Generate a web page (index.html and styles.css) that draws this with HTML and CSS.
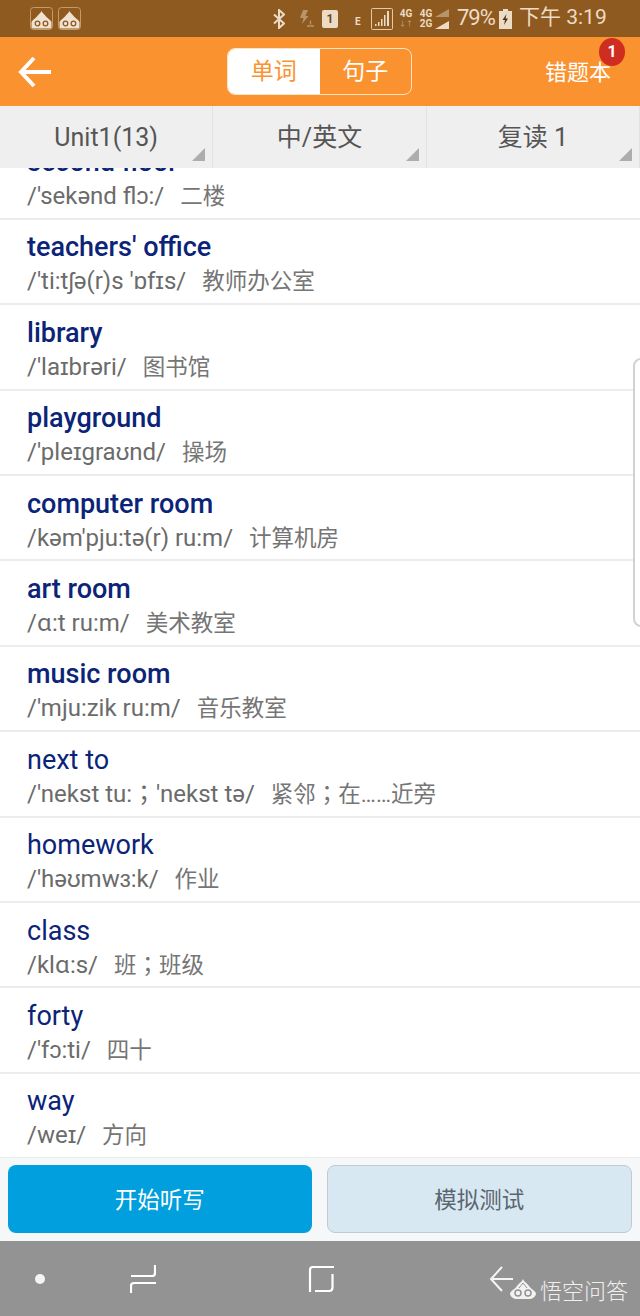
FILE: index.html
```html
<!DOCTYPE html>
<html lang="zh-CN">

<head>
  <meta charset="UTF-8">
  <meta name="viewport" content="width=device-width, initial-scale=1.0">
  <title>单词</title>
  <link rel="stylesheet" href="styles.css">
</head>

<body>
  <div class="phone">
    <!-- status bar -->
    <div class="status-bar">
      <div class="status-left">
        <svg class="app-icon" viewBox="0 0 23 23"><rect x="0.5" y="0.5" width="22" height="22" rx="3" fill="none" stroke="#c79a63"/><path d="M11.500 4c1 2.500 3 3 4.500 5.500 1.500 2 4 3 5.500 5.500v5q0 1.500-1.500 1.500H3q-1.500 0-1.500-1.500v-5c1.500-2.500 4-3.500 5.500-5.500C8.500 7 10.500 6.500 11.500 4z" fill="#efe2d0"/><circle cx="7.500" cy="16.500" r="2.300" fill="none" stroke="#8f5a1f" stroke-width="1.300"/><circle cx="15.500" cy="16.500" r="2.300" fill="none" stroke="#8f5a1f" stroke-width="1.300"/></svg>
        <svg class="app-icon" viewBox="0 0 23 23"><rect x="0.5" y="0.5" width="22" height="22" rx="3" fill="none" stroke="#c79a63"/><path d="M11.500 4c1 2.500 3 3 4.500 5.500 1.500 2 4 3 5.500 5.500v5q0 1.500-1.500 1.500H3q-1.500 0-1.500-1.500v-5c1.500-2.500 4-3.500 5.500-5.500C8.500 7 10.500 6.500 11.500 4z" fill="#efe2d0"/><circle cx="7.500" cy="16.500" r="2.300" fill="none" stroke="#8f5a1f" stroke-width="1.300"/><circle cx="15.500" cy="16.500" r="2.300" fill="none" stroke="#8f5a1f" stroke-width="1.300"/></svg>
      </div>
      <div class="status-right">
        <svg class="ic-bt" viewBox="0 0 12 20"><path d="M1 5.500l10 9-5 4.500V1l5 4.500-10 9" fill="none" stroke="#ecdcc6" stroke-width="2"/></svg>
        <svg class="ic-flash" viewBox="0 0 16 20"><path d="M5 1h5L7.500 7h3L4 15l1.500-6H2z" fill="#b99468"/><path d="M9 17h7M12.500 11.500v4" stroke="#b99468" stroke-width="1.300"/></svg>
        <div class="sim">1</div>
        <span class="net-e">E</span>
        <svg class="ic-signal" viewBox="0 0 22 22"><rect x="0.5" y="0.5" width="21" height="21" rx="1" fill="none" stroke="#e6c9a3"/><path d="M4 18h1.500v-2H4zM7 18h1.500v-4H7zM10 18h1.500v-7H10zM13 18h1.500V7H13zM16 18h2V3h-2z" fill="#ecdcc6"/></svg>
        <div class="net-pair">
          <span>4G</span>
          <span class="net-arrows">↓↑</span>
        </div>
        <div class="net-pair">
          <span>4G</span>
          <span>2G</span>
        </div>
        <svg class="ic-bars" viewBox="0 0 16 20"><path d="M1 8L15 0v8z" fill="#b99468"/><path d="M1 20l14-8v8z" fill="#ecdcc6"/></svg>
        <span class="battery-text">79%</span>
        <svg class="ic-battery" viewBox="0 0 13 20"><path d="M4 0h5v2h4v18H0V2h4z" fill="#ecdcc6"/><path d="M7.500 5L3.500 11h2.500l-1 5 4-6.500H6.500z" fill="#4a3113"/></svg>
        <span class="clock">下午 3:19</span>
      </div>
    </div>

    <!-- header -->
    <header class="app-header">
      <svg class="back" viewBox="0 0 34 32"><path d="M33 16H4M16 2L3 16l13 14" fill="none" stroke="#fff" stroke-width="4"/></svg>
      <div class="switch">
        <div class="switch-item active">单词</div>
        <div class="switch-item">句子</div>
      </div>
      <div class="wrong-book">错题本<span class="badge">1</span></div>
    </header>

    <!-- filters -->
    <div class="filters">
      <div class="filter">Unit1(13)</div>
      <div class="filter">中/英文</div>
      <div class="filter">复读 1</div>
    </div>

    <!-- word list -->
    <div class="list-wrap">
      <ul class="word-list">
        <li class="word"><div class="en bold">second floor</div><div class="ph">/'sekənd flɔ:/<span class="zh">二楼</span></div></li>
        <li class="word"><div class="en bold">teachers' office</div><div class="ph">/'ti:tʃə(r)s 'ɒfɪs/<span class="zh">教师办公室</span></div></li>
        <li class="word"><div class="en bold">library</div><div class="ph">/'laɪbrəri/<span class="zh">图书馆</span></div></li>
        <li class="word"><div class="en bold">playground</div><div class="ph">/'pleɪgraʊnd/<span class="zh">操场</span></div></li>
        <li class="word"><div class="en bold">computer room</div><div class="ph">/kəm'pju:tə(r) ru:m/<span class="zh">计算机房</span></div></li>
        <li class="word"><div class="en bold">art room</div><div class="ph">/ɑ:t ru:m/<span class="zh">美术教室</span></div></li>
        <li class="word"><div class="en bold">music room</div><div class="ph">/'mju:zik ru:m/<span class="zh">音乐教室</span></div></li>
        <li class="word"><div class="en">next to</div><div class="ph">/'nekst tu:<span class="semi" lang="zh-TW">；</span>'nekst tə/<span class="zh">紧邻<span class="semi" lang="zh-TW">；</span>在……近旁</span></div></li>
        <li class="word"><div class="en">homework</div><div class="ph">/'həʊmwɜ:k/<span class="zh">作业</span></div></li>
        <li class="word"><div class="en">class</div><div class="ph">/klɑ:s/<span class="zh">班<span class="semi" lang="zh-TW">；</span>班级</span></div></li>
        <li class="word"><div class="en">forty</div><div class="ph">/'fɔ:ti/<span class="zh">四十</span></div></li>
        <li class="word"><div class="en">way</div><div class="ph">/weɪ/<span class="zh">方向</span></div></li>
      </ul>
      <div class="edge-handle"></div>
    </div>

    <!-- bottom buttons -->
    <div class="actions">
      <button class="btn btn-primary">开始听写</button>
      <button class="btn btn-light">模拟测试</button>
    </div>

    <!-- navigation bar -->
    <nav class="nav-bar">
      <div class="nav-dot"></div>
      <svg class="nav-recent" viewBox="0 0 26 28"><path d="M1 28v-7q0-3 3-3h22M1 11h21q3 0 3-3V0" fill="none" stroke="#fff" stroke-width="2.200"/></svg>
      <svg class="nav-home" viewBox="0 0 26 26"><path d="M26 1H5Q2 1 2 4v22M7 25h14q3.500 0 3.500-3.500V8" fill="none" stroke="#fff" stroke-width="2.200"/></svg>
      <svg class="nav-back" viewBox="0 0 24 26"><path d="M24 13H2M13 1L2 13l11 12" fill="none" stroke="#f5f5f5" stroke-width="2"/></svg>
      <div class="watermark">
        <svg viewBox="0 0 26 20"><path d="M13 0c1 3 4 4 6 7s5 4 7 7c0 4-4 6-7 6H7c-3 0-7-2-7-6 2-3 5-4 7-7s5-4 6-7z" fill="#f2f2f2"/><path d="M13 4c-1 2-3 3-4 5M13 4c1 2 3 3 4 5" fill="none" stroke="#939393"/><circle cx="8" cy="14" r="3" fill="none" stroke="#939393" stroke-width="1.500"/><circle cx="18" cy="14" r="3" fill="none" stroke="#939393" stroke-width="1.500"/></svg>
        <span>悟空问答</span>
      </div>
    </nav>
  </div>
</body>

</html>
```

FILE: styles.css
```css
* {
  box-sizing: border-box;
}

html,
body {
  margin: 0;
  padding: 0;
}

body {
  font-family: Roboto, "Noto Sans CJK SC", sans-serif;
  background: #fff;
}

.phone {
  width: 640px;
  height: 1316px;
  display: flex;
  flex-direction: column;
  overflow: hidden;
}

/* status bar */
.status-bar {
  height: 37px;
  flex: none;
  background: #8f5a1f;
  display: flex;
  align-items: center;
  justify-content: space-between;
  padding: 0 34px 0 30px;
  color: #ecdcc6;
}

.status-left {
  display: flex;
  gap: 5px;
  margin-top: -1px;
}

.app-icon {
  width: 23px;
  height: 23px;
}

.status-right {
  display: flex;
  align-items: center;
}

.ic-bt {
  width: 12px;
  height: 20px;
  margin-right: 13px;
}

.ic-flash {
  width: 16px;
  height: 20px;
  margin-right: 8px;
}

.sim {
  width: 16px;
  height: 18px;
  background: #ecdcc6;
  border-radius: 2px;
  color: #6b4a22;
  font-size: 12px;
  font-weight: 700;
  text-align: center;
  line-height: 19px;
  margin-right: 17px;
}

.net-e {
  width: 6px;
  font-size: 10px;
  font-weight: 700;
  align-self: flex-start;
  margin: 8px 10px 0 0;
}

.ic-signal {
  width: 22px;
  height: 22px;
  margin-right: 6px;
}

.net-pair {
  width: 14px;
  display: flex;
  flex-direction: column;
  font-size: 10px;
  font-weight: 700;
  line-height: 10px;
  text-align: center;
  margin-right: 6px;
}

.net-pair + .net-pair {
  margin-right: 1px;
}

.net-arrows {
  font-size: 7px;
  color: #b99468;
}

.ic-bars {
  width: 16px;
  height: 20px;
  margin-right: 7px;
}

.battery-text {
  width: 36px;
  font-size: 22px;
  line-height: 1;
  letter-spacing: -1px;
  white-space: nowrap;
  margin: -2px 6px 0 0;
}

.ic-battery {
  width: 13px;
  height: 20px;
  margin-right: 7px;
}

.clock {
  width: 87px;
  font-size: 21px;
  line-height: 1;
  white-space: nowrap;
  margin-top: -2px;
}

/* header */
.app-header {
  height: 69px;
  flex: none;
  background: #fb9230;
  display: flex;
  align-items: center;
  position: relative;
  padding-left: 18px;
}

.back {
  width: 34px;
  height: 32px;
}

.switch {
  display: flex;
  width: 185px;
  height: 47px;
  margin-left: 175px;
  border: 1px solid #ffe3c0;
  border-radius: 8px;
  overflow: hidden;
}

.switch-item {
  flex: 1;
  color: #fff;
  font-size: 23px;
  text-align: center;
  line-height: 45px;
}

.switch-item.active {
  background: #fff;
  color: #fb9230;
}

.wrong-book {
  margin-left: auto;
  margin-right: 29px;
  margin-bottom: 4px;
  color: #fff;
  font-size: 22px;
  position: relative;
}

.badge {
  position: absolute;
  right: -14px;
  top: -16px;
  width: 26px;
  height: 28px;
  border-radius: 50%;
  background: #cf2d20;
  color: #fff;
  font-size: 16px;
  font-weight: 700;
  text-align: center;
  line-height: 28px;
}

/* filters */
.filters {
  height: 62px;
  flex: none;
  background: #efefef;
  display: flex;
}

.filter {
  flex: 1;
  position: relative;
  border-right: 1px solid #e2e2e2;
  color: #555;
  font-size: 25px;
  text-align: center;
  line-height: 64px;
}

.filter::after {
  content: "";
  position: absolute;
  right: 7px;
  bottom: 7px;
  border-style: solid;
  border-width: 0 0 13px 13px;
  border-color: transparent transparent #adadad transparent;
}

/* word list */
.list-wrap {
  flex: 1;
  min-height: 0;
  position: relative;
  overflow: hidden;
  background: #fff;
}

.word-list {
  list-style: none;
  margin: -33.5px 0 0;
  padding: 0;
}

.word {
  height: 85.4px;
  padding: 9.5px 27px 0;
  border-bottom: 2px solid #ededed;
}

.en {
  color: #0b2478;
  font-size: 27px;
  line-height: 36px;
}

.en.bold {
  font-weight: 500;
}

.ph {
  color: #6b6b6b;
  font-size: 24px;
  line-height: 30px;
  margin-top: 1px;
  white-space: nowrap;
}

.zh {
  margin-left: 16px;
  font-size: 22.5px;
  color: #757575;
}

.semi {
  font-family: "Noto Sans CJK TC", sans-serif;
  line-height: 1;
}

.edge-handle {
  position: absolute;
  right: -9px;
  top: 190px;
  width: 16px;
  height: 269px;
  border: 2px solid #d2d2d2;
  border-radius: 8px;
  background: #fff;
}

/* bottom buttons */
.actions {
  height: 83px;
  flex: none;
  background: #f5f7f9;
  display: flex;
  gap: 15px;
  padding: 7px 8px 8px;
}

.btn {
  flex: 1;
  border-radius: 8px;
  font-family: inherit;
  font-size: 22.5px;
  padding: 0 0 2px;
}

.btn-primary {
  background: #019fdd;
  border: none;
  color: #fff;
}

.btn-light {
  background: #d8e8f3;
  border: 1px solid #bfcbd4;
  color: #5b6570;
}

/* navigation bar */
.nav-bar {
  height: 75px;
  flex: none;
  background: #939393;
  position: relative;
  display: flex;
  align-items: center;
  padding-left: 35px;
}

.nav-dot {
  width: 10px;
  height: 10px;
  border-radius: 50%;
  background: #f5f5f5;
}

.nav-recent {
  width: 26px;
  height: 28px;
  margin-left: 85px;
}

.nav-home {
  width: 26px;
  height: 26px;
  margin-left: 152px;
}

.nav-back {
  width: 24px;
  height: 26px;
  margin-left: 155px;
}

.watermark {
  position: absolute;
  left: 510px;
  top: 38px;
  display: flex;
  align-items: flex-start;
  gap: 4px;
  color: #efefef;
  font-size: 22px;
  font-weight: 300;
  line-height: 26px;
}

.watermark svg {
  width: 26px;
  height: 20px;
}
```
